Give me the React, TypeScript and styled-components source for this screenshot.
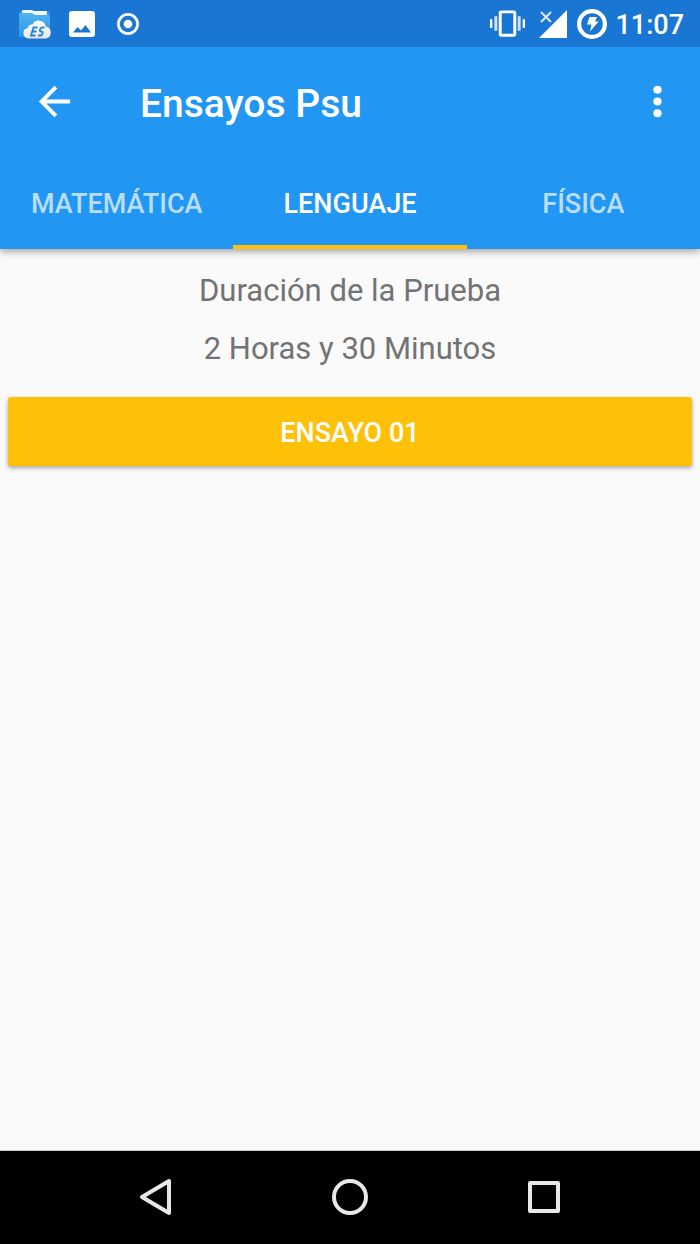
import React, { useState } from "react";
import styled, { createGlobalStyle } from "styled-components";

const GlobalStyle = createGlobalStyle`
  *, *::before, *::after { box-sizing: border-box; }
  body {
    margin: 0;
    background: #fafafa;
    font-family: Roboto, "Liberation Sans", sans-serif;
  }
  button { font-family: inherit; border: 0; padding: 0; cursor: pointer; }
  svg { display: block; }
`;

const Screen = styled.div`
  display: flex;
  flex-direction: column;
  min-height: 100vh;
`;

const StatusBar = styled.div`
  position: relative;
  z-index: 1;
  display: flex;
  align-items: center;
  justify-content: space-between;
  height: 47px;
  padding: 0 16px 0 18px;
  background: #1976d2;
  color: #fff;
`;

const StatusGroup = styled.div<{ $gap: number }>`
  display: flex;
  align-items: center;
  gap: ${(p) => p.$gap}px;
`;

const Clock = styled.time`
  font-size: 27px;
  font-weight: 500;
  line-height: 32px;
  padding-top: 2px;
`;

const AppBar = styled.header`
  background: #2196f3;
  color: #fff;
  box-shadow: 0 2px 8px rgba(0, 0, 0, 0.4);
`;

const Toolbar = styled.div`
  display: flex;
  align-items: center;
  height: 109px;
  padding: 0 19px 0 31px;
`;

const IconButton = styled.button`
  display: flex;
  align-items: center;
  justify-content: center;
  background: none;
  color: inherit;
`;

const Title = styled.h1`
  flex: 1;
  margin: 0;
  padding: 4px 0 0 62px;
  font-size: 39px;
  font-weight: 500;
  line-height: 46px;
`;

const TabList = styled.div`
  display: flex;
`;

const Tab = styled.button<{ $active: boolean }>`
  flex: 1;
  height: 93px;
  padding-top: 6px;
  border-bottom: 4px solid ${(p) => (p.$active ? "#ffc107" : "transparent")};
  background: none;
  color: ${(p) => (p.$active ? "#fff" : "rgba(255, 255, 255, 0.7)")};
  font-size: 27px;
  font-weight: 500;
  line-height: 32px;
  text-transform: uppercase;
`;

const Content = styled.main`
  flex: 1;
  display: flex;
  flex-direction: column;
  padding: 13px 8px;
`;

const Info = styled.p`
  margin: 0;
  color: #737373;
  font-size: 31px;
  line-height: 58px;
  text-align: center;
`;

const RaisedButton = styled.button`
  height: 69px;
  margin-top: 19px;
  padding-top: 3px;
  border-radius: 3px;
  background: #ffc107;
  color: #fff;
  font-size: 27px;
  font-weight: 500;
  line-height: 32px;
  text-transform: uppercase;
  box-shadow: 0 2px 4px rgba(0, 0, 0, 0.35);
`;

const NavBar = styled.nav`
  display: flex;
  height: 94px;
  padding: 0 59px 1px;
  border-top: 1px solid #c8cccc;
  background: #000;
  color: #e8e8e8;
`;

const NavButton = styled(IconButton)`
  flex: 1;
`;

const FilesIcon = () => (
  <svg width="34" height="32" viewBox="0 0 34 32" aria-hidden="true">
    <defs>
      <linearGradient id="folder" x1="0" y1="0" x2="0" y2="1">
        <stop offset="0" stopColor="#4fb3f3" />
        <stop offset="1" stopColor="#2d97e6" />
      </linearGradient>
      <linearGradient id="cloud" x1="0" y1="0" x2="0" y2="1">
        <stop offset="0" stopColor="#ffffff" />
        <stop offset="1" stopColor="#e4e6e8" />
      </linearGradient>
    </defs>
    <path d="M1 5q0-2 2-2h27q2 0 2 2v22q0 2-2 2H3q-2 0-2-2z" fill="#2c91e2" />
    <path d="M4 3q0-1 1-1h9l2 1h12q1 0 1 1v4H4z" fill="#f4f8fb" />
    <path d="M1 7q0-2 2-2h11l3 2h13q2 0 2 2v18q0 2-2 2H3q-2 0-2-2z" fill="url(#folder)" />
    <path
      d="M10.500 30.500a5.300 5.300 0 0 1-.8-10.500a4.200 4.200 0 0 1 4.800-3.500a7 7 0 0 1 13.200 2a6.200 6.200 0 0 1 .8 12z"
      fill="url(#cloud)"
    />
    <path
      d="M19.500 19.500h-4l-2.500 8h4.500M14.500 23.500h4M26.500 19.500h-2.500q-1.500 0-2 2t1 2h.5q1.500 0 1 2t-2 2h-2.500"
      fill="none"
      stroke="#2185d8"
      strokeWidth="1.800"
    />
  </svg>
);

const PictureIcon = () => (
  <svg width="26" height="26" viewBox="0 0 26 26" fill="currentColor" aria-hidden="true">
    <path
      fillRule="evenodd"
      d="M3 0h20a3 3 0 0 1 3 3v20a3 3 0 0 1-3 3H3a3 3 0 0 1-3-3V3a3 3 0 0 1 3-3zM4 21.500h18L16.500 14l-4.500 5.500-3.500-3.500z"
    />
  </svg>
);

const RecordIcon = () => (
  <svg width="32" height="32" viewBox="0 0 32 32" aria-hidden="true">
    <circle cx="16" cy="16" r="9.600" fill="none" stroke="currentColor" strokeWidth="2.800" />
    <circle cx="16" cy="16" r="4.300" fill="currentColor" />
  </svg>
);

const VibrateIcon = () => (
  <svg width="35" height="35" viewBox="0 0 24 24" fill="currentColor" aria-hidden="true">
    <path d="M0 15h1.600V9H0zM22.400 9v6H24V9zM16.500 3h-9C6.670 3 6 3.670 6 4.500v15c0 .83.67 1.500 1.500 1.500h9c.83 0 1.500-.67 1.500-1.500v-15c0-.83-.67-1.500-1.500-1.500zM16 19H8V5h8z" />
    <path opacity=".8" d="M3 17h2V7H3zM19 17h2V7h-2z" />
  </svg>
);

const SignalIcon = () => (
  <svg width="28" height="28" viewBox="0 0 28 28" aria-hidden="true">
    <path d="M28 0v28H0z" fill="currentColor" />
    <path d="M2 2l10 10M12 2l-10 10" stroke="currentColor" strokeOpacity=".85" strokeWidth="2" />
  </svg>
);

const BatteryIcon = () => (
  <svg width="30" height="30" viewBox="0 0 30 30" aria-hidden="true">
    <circle cx="15" cy="15" r="12.900" fill="none" stroke="currentColor" strokeWidth="4.200" />
    <path d="M12.500 8h7.500l-2 4.500h3.700l-8.700 10 1.500-7h-4.500z" fill="currentColor" />
  </svg>
);

const BackArrowIcon = () => (
  <svg width="47" height="47" viewBox="0 0 24 24" fill="currentColor" aria-hidden="true">
    <path d="M20 11H7.830l5.590-5.590L12 4l-8 8 8 8 1.410-1.410L7.830 13H20z" />
  </svg>
);

const MoreIcon = () => (
  <svg width="47" height="47" viewBox="0 0 24 24" fill="currentColor" aria-hidden="true">
    <circle cx="12" cy="6" r="2.100" />
    <circle cx="12" cy="12" r="2.100" />
    <circle cx="12" cy="18" r="2.100" />
  </svg>
);

const NavIcon = ({ children }: { children: React.ReactNode }) => (
  <svg
    width="40"
    height="40"
    viewBox="0 0 40 40"
    fill="none"
    stroke="currentColor"
    strokeWidth="4"
    strokeLinejoin="round"
    aria-hidden="true"
  >
    {children}
  </svg>
);

const subjects = [
  { id: "mat", label: "Matemática" },
  { id: "len", label: "Lenguaje" },
  { id: "fis", label: "Física" },
];

export default function App() {
  const [active, setActive] = useState("len");

  return (
    <Screen>
      <GlobalStyle />
      <StatusBar>
        <StatusGroup $gap={17}>
          <FilesIcon />
          <PictureIcon />
          <RecordIcon />
        </StatusGroup>
        <StatusGroup $gap={8}>
          <StatusGroup $gap={14}>
            <VibrateIcon />
            <StatusGroup $gap={10}>
              <SignalIcon />
              <BatteryIcon />
            </StatusGroup>
          </StatusGroup>
          <Clock>11:07</Clock>
        </StatusGroup>
      </StatusBar>
      <AppBar>
        <Toolbar>
          <IconButton type="button" aria-label="Volver">
            <BackArrowIcon />
          </IconButton>
          <Title>Ensayos Psu</Title>
          <IconButton type="button" aria-label="Más opciones">
            <MoreIcon />
          </IconButton>
        </Toolbar>
        <TabList role="tablist">
          {subjects.map((s) => (
            <Tab
              key={s.id}
              type="button"
              role="tab"
              aria-selected={active === s.id}
              $active={active === s.id}
              onClick={() => setActive(s.id)}
            >
              {s.label}
            </Tab>
          ))}
        </TabList>
      </AppBar>
      <Content>
        <Info>Duración de la Prueba</Info>
        <Info>2 Horas y 30 Minutos</Info>
        <RaisedButton type="button">Ensayo 01</RaisedButton>
      </Content>
      <NavBar>
        <NavButton type="button" aria-label="Atrás">
          <NavIcon>
            <path d="M33 4v32L6 20z" />
          </NavIcon>
        </NavButton>
        <NavButton type="button" aria-label="Inicio">
          <NavIcon>
            <circle cx="20" cy="20" r="16" />
          </NavIcon>
        </NavButton>
        <NavButton type="button" aria-label="Recientes">
          <NavIcon>
            <rect x="6" y="6" width="28" height="28" />
          </NavIcon>
        </NavButton>
      </NavBar>
    </Screen>
  );
}
